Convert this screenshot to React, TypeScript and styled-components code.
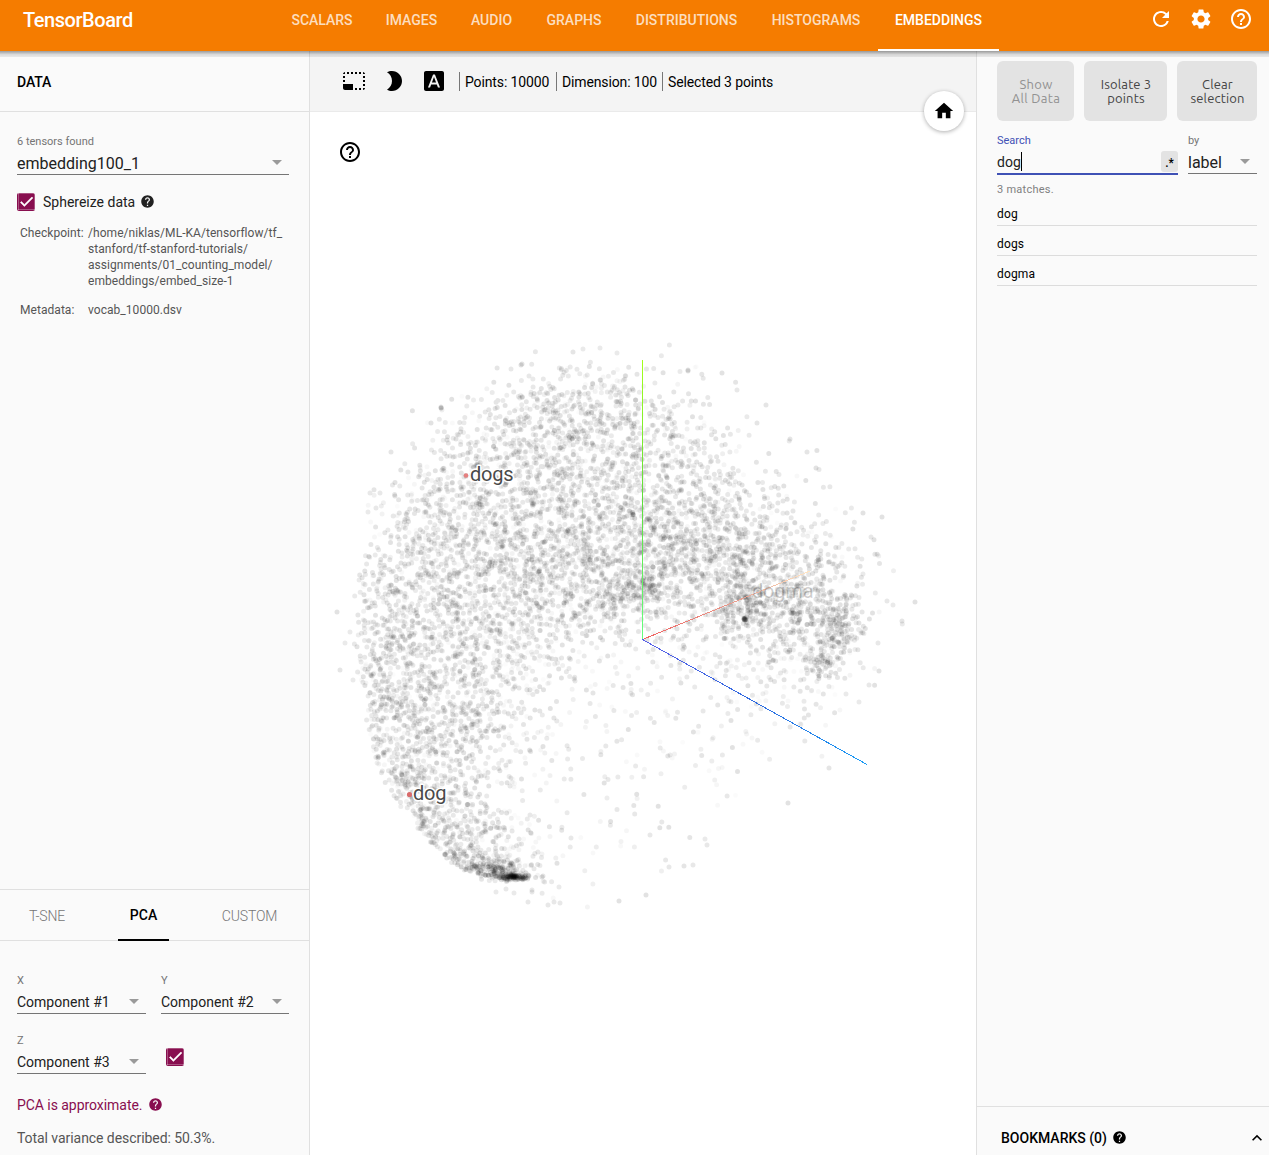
import React from "react";
import styled, { createGlobalStyle } from "styled-components";
import {
  MdArrowDropDown,
  MdBrightness2,
  MdCheck,
  MdExpandLess,
  MdFontDownload,
  MdHelp,
  MdHelpOutline,
  MdHome,
  MdPhotoSizeSelectSmall,
  MdRefresh,
  MdSettings,
} from "react-icons/md";

const ORANGE = "#f57c00";
const LINE = "#e0e0e0";
const PLUM = "#880e4f";

const GlobalStyle = createGlobalStyle`
  * { box-sizing: border-box; }
  body { margin: 0; font-family: Roboto, "Liberation Sans", sans-serif; font-size: 14px; color: #000; }
  svg { display: block; flex: none; }
`;

const Page = styled.div`
  display: flex;
  flex-direction: column;
  height: 1155px;
  overflow: hidden;
  background: #fff;
`;

/* ---------- header ---------- */
const Header = styled.header`
  position: relative;
  display: flex;
  flex: none;
  height: 51px;
  background: ${ORANGE};
  color: #fff;
  &::after {
    content: "";
    position: absolute;
    z-index: 3;
    top: 100%;
    left: 0;
    right: 0;
    height: 6px;
    background: linear-gradient(rgba(0, 0, 0, 0.38), rgba(0, 0, 0, 0.12) 60%, rgba(0, 0, 0, 0.07));
  }
`;
const Brand = styled.div`
  width: 275px;
  padding: 8px 0 0 23px;
  font-size: 20px;
  line-height: 24px;
  font-weight: 500;
  letter-spacing: -0.45px;
`;
const Nav = styled.nav`
  display: flex;
`;
const NavTab = styled.div<{ $w: number; $active?: boolean }>`
  width: ${(p) => p.$w}px;
  padding-top: 10px;
  line-height: 20px;
  text-align: center;
  font-weight: 500;
  white-space: nowrap;
  color: ${(p) => (p.$active ? "#fff" : "rgba(255,255,255,0.76)")};
  border-bottom: 2px solid ${(p) => (p.$active ? "#fff" : "transparent")};
`;
const HeaderIcons = styled.div`
  display: flex;
  gap: 16px;
  margin-left: auto;
  padding: 7px 16px 0 0;
`;

/* ---------- columns ---------- */
const Columns = styled.div`
  display: flex;
  flex: 1;
  min-height: 0;
`;
const LeftPane = styled.aside`
  display: flex;
  flex-direction: column;
  width: 310px;
  background: #fafafa;
  border-right: 1px solid ${LINE};
`;
const Stage = styled.main`
  position: relative;
  display: flex;
  flex-direction: column;
  width: 666px;
`;
const RightPane = styled.aside`
  display: flex;
  flex-direction: column;
  width: 293px;
  background: #fafafa;
  border-left: 1px solid ${LINE};
`;

/* ---------- left pane ---------- */
const PaneTitle = styled.div`
  height: 61px;
  padding: 0 17px;
  line-height: 62px;
  font-weight: 500;
  letter-spacing: -0.1px;
  border-bottom: 1px solid ${LINE};
`;
const DataBody = styled.div`
  flex: 1;
  padding: 22px 20px 0 17px;
`;
const Caption = styled.div<{ $accent?: boolean }>`
  font-size: 11px;
  line-height: 16px;
  color: ${(p) => (p.$accent ? "#3f51b5" : "#757575")};
`;
const SelectBox = styled.div<{ $size?: number; $h?: number }>`
  display: flex;
  align-items: center;
  justify-content: space-between;
  height: ${(p) => p.$h ?? 25}px;
  padding-top: 2px;
  font-size: ${(p) => p.$size ?? 14}px;
  color: #212121;
  white-space: nowrap;
  border-bottom: 1px solid #757575;
  svg { color: #9a9a9a; margin-top: -2px; }
`;
const CheckRow = styled.div`
  display: flex;
  align-items: center;
  margin-top: 17px;
  height: 20px;
  color: #212121;
`;
const CheckBox = styled.span`
  display: flex;
  align-items: center;
  justify-content: center;
  width: 18px;
  height: 18px;
  border-radius: 2px;
  background: ${PLUM};
  color: #fff;
  svg { margin-top: -2px; stroke: #fff; stroke-width: 0.8px; }
`;
const CheckLabel = styled.span`
  margin: 0 5px 0 8px;
`;
const InlineHelp = styled(MdHelp)`
  width: 15px;
  height: 15px;
  margin-top: -2px;
`;
const Facts = styled.dl`
  display: grid;
  grid-template-columns: 68px 1fr;
  row-gap: 13px;
  margin: 13px 0 0 3px;
  font-size: 12px;
  line-height: 16px;
  color: #555;
  dt, dd { margin: 0; white-space: pre; letter-spacing: 0.05px; }
`;
const ProjectionTabs = styled.div`
  display: flex;
  height: 52px;
  border-top: 1px solid ${LINE};
  border-bottom: 1px solid ${LINE};
`;
const ProjectionTab = styled.div<{ $left: number; $w: number; $active?: boolean }>`
  height: 51px;
  margin-left: ${(p) => p.$left}px;
  width: ${(p) => p.$w}px;
  text-align: center;
  line-height: ${(p) => (p.$active ? 50 : 52)}px;
  font-weight: ${(p) => (p.$active ? 500 : 300)};
  letter-spacing: ${(p) => (p.$active ? 0 : -0.15)}px;
  color: ${(p) => (p.$active ? "#000" : "#757575")};
  border-bottom: 2px solid ${(p) => (p.$active ? "#000" : "transparent")};
`;
const PcaBody = styled.div`
  height: 214px;
  padding: 32px 20px 0 17px;
`;
const AxisGrid = styled.div`
  display: grid;
  grid-template-columns: 129px 128px;
  column-gap: 15px;
  row-gap: 19px;
`;
const AxisCheck = styled.div`
  padding: 15px 0 0 5px;
`;
const ApproxNote = styled.div`
  display: flex;
  align-items: center;
  gap: 6px;
  margin-top: 21px;
  line-height: 20px;
  letter-spacing: -0.05px;
  color: ${PLUM};
`;
const Variance = styled.div`
  margin-top: 13px;
  line-height: 20px;
  letter-spacing: -0.06px;
  color: #555;
`;

/* ---------- stage ---------- */
const Toolbar = styled.div`
  display: flex;
  align-items: center;
  flex: none;
  height: 61px;
  padding-left: 32px;
  background: #f4f4f4;
  border-bottom: 1px solid #eaeaea;
`;
const ToolIcons = styled.div`
  display: flex;
  gap: 16px;
  margin-right: 13px;
`;
const Stat = styled.div<{ $w: number }>`
  width: ${(p) => p.$w}px;
  height: 19px;
  padding-left: 5px;
  border-left: 1px solid #777;
  line-height: 21px;
  letter-spacing: -0.13px;
  white-space: nowrap;
`;
const HomeButton = styled.button`
  position: absolute;
  z-index: 2;
  top: 40px;
  right: 12px;
  display: flex;
  align-items: center;
  justify-content: center;
  width: 40px;
  height: 40px;
  padding: 0;
  border: 0;
  border-radius: 50%;
  background: #fff;
  color: #000;
  box-shadow: 0 1px 4px rgba(0, 0, 0, 0.32);
`;
const HelpSpot = styled.div`
  position: absolute;
  top: 89px;
  left: 28px;
`;
const Scene = styled.svg`
  text { font-family: Roboto, "Liberation Sans", sans-serif; font-size: 20px; letter-spacing: -0.2px; paint-order: stroke; stroke: #fff; stroke-width: 3px; stroke-linejoin: round; }
`;

/* ---------- right pane ---------- */
const Inspector = styled.div`
  flex: 1;
  padding: 10px 12px 0 20px;
`;
const ButtonRow = styled.div`
  display: grid;
  grid-template-columns: 77px 83px 80px;
  gap: 10px;
`;
const ActionButton = styled.button<{ $off?: boolean }>`
  height: 60px;
  padding: 0 0 0 1px;
  border: 0;
  border-radius: 6px;
  background: #e3e3e3;
  color: ${(p) => (p.$off ? "#929292" : "#444")};
  font: 13px/14px Ubuntu, "Noto Sans", sans-serif;
  letter-spacing: ${(p) => (p.$off ? 0.3 : 0.15)}px;
  white-space: pre-line;
`;
const SearchRow = styled.div`
  display: grid;
  grid-template-columns: 181px 69px;
  gap: 10px;
  margin-top: 12px;
`;
const SearchBox = styled.div`
  display: flex;
  align-items: center;
  height: 26px;
  padding-top: 1px;
  border-bottom: 2px solid #3f51b5;
  color: #212121;
`;
const Caret = styled.span`
  width: 1px;
  height: 19px;
  background: #000;
`;
const RegexToggle = styled.span`
  width: 17px;
  height: 21px;
  margin: 0 0 1px auto;
  border-radius: 3px;
  background: #e3e3e3;
  font-size: 12px;
  line-height: 25px;
  font-weight: 500;
  text-align: center;
  color: #000;
`;
const MatchCount = styled.div`
  margin-top: 7px;
  font-size: 11px;
  line-height: 16px;
  letter-spacing: 0.25px;
  color: #808080;
`;
const Match = styled.div`
  height: 30px;
  padding-top: 4px;
  line-height: 28px;
  font-size: 12px;
  letter-spacing: 0.15px;
  border-bottom: 1px solid #dcdcdc;
`;
const MatchList = styled.div`
  margin-top: -2px;
`;
const Bookmarks = styled.div`
  display: flex;
  align-items: center;
  gap: 5px;
  height: 49px;
  padding: 14px 2px 0 24px;
  border-top: 1px solid ${LINE};
  font-weight: 500;
  svg:last-child { margin-left: auto; }
`;

/* ---------- point cloud ---------- */
// Points per 30px cell, first cell centred on (345, 355) in page units.
const DENSITY: number[][] = [
  [0, 0, 0, 0, 0, 0, 1, 0, 1, 1, 1, 1, 0, 0, 0, 0, 0, 0, 0, 0],
  [0, 0, 0, 0, 1, 3, 9, 14, 18, 14, 9, 6, 2, 1, 0, 0, 0, 0, 0, 0],
  [0, 0, 0, 2, 8, 15, 21, 28, 30, 25, 17, 12, 7, 2, 0, 0, 0, 0, 0, 0],
  [0, 0, 0, 9, 18, 24, 29, 29, 29, 27, 20, 17, 11, 4, 1, 1, 0, 0, 0, 0],
  [0, 0, 6, 15, 22, 26, 28, 28, 28, 28, 24, 22, 16, 10, 5, 3, 0, 0, 0, 0],
  [0, 2, 14, 20, 25, 28, 28, 30, 30, 30, 36, 33, 30, 20, 13, 6, 4, 1, 0, 0],
  [0, 6, 20, 26, 28, 30, 30, 30, 32, 34, 42, 38, 38, 30, 20, 13, 9, 2, 1, 0],
  [0, 12, 24, 28, 28, 32, 32, 34, 32, 36, 44, 40, 36, 36, 30, 24, 18, 8, 2, 0],
  [0, 17, 28, 30, 30, 30, 32, 30, 34, 34, 34, 27, 24, 30, 32, 30, 28, 10, 1, 0],
  [0, 22, 28, 28, 26, 28, 26, 20, 16, 14, 8, 11, 14, 24, 28, 26, 34, 12, 1, 0],
  [0, 28, 30, 27, 24, 22, 18, 12, 9, 8, 7, 7, 9, 12, 13, 19, 26, 8, 0, 0],
  [0, 32, 30, 26, 22, 18, 13, 8, 6, 5, 4, 5, 6, 7, 8, 9, 8, 1, 0, 0],
  [0, 32, 32, 28, 20, 16, 10, 8, 4, 4, 3, 3, 4, 4, 6, 6, 2, 0, 0, 0],
  [0, 28, 34, 28, 22, 13, 9, 5, 4, 3, 3, 3, 3, 4, 3, 1, 0, 0, 0, 0],
  [0, 20, 36, 30, 20, 12, 7, 3, 3, 3, 2, 2, 3, 2, 1, 0, 0, 0, 0, 0],
  [0, 6, 34, 34, 20, 12, 7, 3, 3, 3, 2, 1, 1, 1, 0, 0, 0, 0, 0, 0],
  [0, 0, 26, 46, 32, 20, 10, 4, 2, 2, 2, 1, 1, 0, 0, 0, 0, 0, 0, 0],
  [0, 0, 4, 44, 46, 38, 14, 3, 2, 1, 1, 1, 0, 0, 0, 0, 0, 0, 0, 0],
  [0, 0, 0, 0, 1, 2, 2, 2, 1, 0, 0, 0, 0, 0, 0, 0, 0, 0, 0, 0],
];
// Tight groups: x, y, spread x, spread y, count.
const CLUSTERS = [
  [514, 877, 8, 1.5, 130],
  [495, 870, 15, 5, 150],
  [745, 619, 0.8, 0.8, 18],
  [748, 603, 10, 10, 75],
  [843, 618, 8, 14, 60],
  [832, 640, 8, 14, 25],
  [823, 664, 8, 8, 40],
  [622, 593, 15, 7, 50],
  [648, 585, 8, 9, 40],
  [796, 613, 5, 4, 18],
  [472, 705, 16, 8, 10],
  [745, 560, 30, 16, 40],
];
// Sparse points that fall outside the dense body of the sphere.
const STRAYS = [
  [337, 612], [340, 670], [353, 680], [345, 643], [350, 632], [573, 352], [583, 349], [600, 348],
  [521, 365], [511, 369], [441, 408], [431, 423], [391, 452], [722, 373], [688, 371], [737, 390],
  [766, 405], [757, 423], [790, 439], [807, 452], [816, 468], [863, 513], [882, 517], [871, 537],
  [887, 601], [893, 605], [915, 602], [902, 621], [878, 643], [879, 671], [869, 685], [846, 694],
  [859, 702], [829, 768], [788, 803], [548, 905], [554, 902], [560, 903], [528, 902], [559, 887],
  [619, 901], [646, 895], [669, 867], [684, 866], [693, 865], [707, 845], [705, 839], [370, 493],
  [380, 493], [368, 512], [376, 508], [522, 364], [688, 370], [441, 407], [543, 876], [542, 877],
  [532, 890], [532, 892], [514, 893], [496, 892], [506, 889],
];
// Lower-left silhouette of the sphere.
const RIM = [
  [500, 366], [560, 358], [600, 353], [640, 353], [680, 357], [710, 362], [765, 374], [800, 393],
  [820, 409], [838, 425], [860, 447], [872, 466], [880, 490], [883, 540], [960, 548],
];
const rimAt = (y: number) => {
  if (y < RIM[0][0]) return 0;
  for (let i = 1; i < RIM.length; i++) {
    const [y0, x0] = RIM[i - 1];
    const [y1, x1] = RIM[i];
    if (y <= y1) return x0 + ((x1 - x0) * (y - y0)) / (y1 - y0);
  }
  return 0;
};

const LAYERS = 90;
function buildCloud() {
  let seed = 20177;
  const rnd = () => {
    seed = (seed + 0x6d2b79f5) | 0;
    let t = Math.imul(seed ^ (seed >>> 15), 1 | seed);
    t = (t + Math.imul(t ^ (t >>> 7), 61 | t)) ^ t;
    return ((t ^ (t >>> 14)) >>> 0) / 4294967296;
  };
  const gauss = () => Math.sqrt(-2 * Math.log(rnd() + 1e-9)) * Math.cos(6.28318 * rnd());
  const near: string[] = Array(LAYERS).fill("");
  const far: string[] = Array(LAYERS).fill("");
  const put = (set: string[], x: number, y: number) => {
    set[Math.floor(rnd() * LAYERS)] += `M${x.toFixed(1)} ${y.toFixed(1)}h0`;
  };
  DENSITY.forEach((row, r) =>
    row.forEach((n, c) => {
      const total = Math.round(n * (n > 10 ? 1.75 : 1.3));
      for (let i = 0; i < total; i++) {
        // triangular spread blends neighbouring cells
        const x = 345 + c * 30 + (rnd() + rnd() - 1) * 30;
        const y = 355 + r * 30 + (rnd() + rnd() - 1) * 30;
        if (x < rimAt(y) + rnd() * 3) continue;
        const fade = y > 640 && x > 500 ? 0.5 : x > 700 ? 0.15 : 0.25;
        put(rnd() < fade ? far : near, x, y);
      }
    })
  );
  CLUSTERS.forEach(([cx, cy, sx, sy, n]) => {
    for (let i = 0; i < n; i++) {
      const x = cx + gauss() * sx;
      const y = cy + gauss() * sy;
      if (x >= rimAt(y) || (y > 876 && y < 882 && x > 480)) put(near, x, y);
    }
  });
  STRAYS.forEach(([x, y]) => put(near, x, y));
  return { near, far };
}
const CLOUD = buildCloud();

const Projection = () => (
  <Scene width="666" height="1043" viewBox="310 112 666 1043">
    <defs>
      <linearGradient id="yAxis" gradientUnits="userSpaceOnUse" x1="642" y1="640" x2="642" y2="360">
        <stop offset="0" stopColor="#66ff80" />
        <stop offset="0.5" stopColor="#5fdc3c" />
        <stop offset="1" stopColor="#a5ff1c" />
      </linearGradient>
      <linearGradient id="xAxis" gradientUnits="userSpaceOnUse" x1="642" y1="640" x2="810" y2="571">
        <stop offset="0" stopColor="#f06060" />
        <stop offset="0.6" stopColor="#e8a090" />
        <stop offset="1" stopColor="#ffe6c4" />
      </linearGradient>
      <linearGradient id="zAxis" gradientUnits="userSpaceOnUse" x1="642" y1="640" x2="867" y2="764">
        <stop offset="0" stopColor="#5a60e8" />
        <stop offset="0.5" stopColor="#2f6be0" />
        <stop offset="1" stopColor="#1a9cf5" />
      </linearGradient>
    </defs>
    <g fill="none" strokeLinecap="round" strokeWidth="5">
      {CLOUD.far.map((d, i) => (
        <path key={`f${i}`} d={d} stroke="#000" strokeOpacity={0.015 + (i % 9) * 0.007} />
      ))}
      {CLOUD.near.map((d, i) => (
        <path key={`n${i}`} d={d} stroke="#000" strokeOpacity={0.082 + (i % 4) * 0.01} />
      ))}
    </g>
    <g shapeRendering="crispEdges" strokeWidth="1" fill="none">
      <path d="M642.5 640L642.6 360" stroke="url(#yAxis)" />
      <path d="M642.5 639.5L810 571" stroke="url(#xAxis)" />
      <path d="M642.5 639.5L867 764.5" stroke="url(#zAxis)" />
    </g>
    <circle cx="466" cy="475.5" r="2.3" fill="#e57f7f" />
    <circle cx="409.5" cy="794.5" r="2.6" fill="#d96b6b" />
    <text x="470" y="481" fill="#4a4a4a">dogs</text>
    <text x="413" y="800" fill="#4a4a4a">dog</text>
    <text x="752" y="598" fill="#000" fillOpacity="0.2" strokeOpacity="0.15">dogma</text>
  </Scene>
);

const NAV: [string, number][] = [
  ["SCALARS", 94],
  ["IMAGES", 85],
  ["AUDIO", 75],
  ["GRAPHS", 90],
  ["DISTRIBUTIONS", 135],
  ["HISTOGRAMS", 124],
  ["EMBEDDINGS", 121],
];

const Dropdown = ({ value, size, height }: { value: string; size?: number; height?: number }) => (
  <SelectBox $size={size} $h={height}>
    {value}
    <MdArrowDropDown size={24} />
  </SelectBox>
);

export default function App() {
  return (
    <Page>
      <GlobalStyle />
      <Header>
        <Brand>TensorBoard</Brand>
        <Nav>
          {NAV.map(([name, w]) => (
            <NavTab key={name} $w={w} $active={name === "EMBEDDINGS"}>
              {name}
            </NavTab>
          ))}
        </Nav>
        <HeaderIcons>
          <MdRefresh size={24} />
          <MdSettings size={24} />
          <MdHelpOutline size={24} />
        </HeaderIcons>
      </Header>
      <Columns>
        <LeftPane>
          <PaneTitle>DATA</PaneTitle>
          <DataBody>
            <Caption>6 tensors found</Caption>
            <Dropdown value="embedding100_1" size={16} />
            <CheckRow>
              <CheckBox><MdCheck size={17} /></CheckBox>
              <CheckLabel>Sphereize data</CheckLabel>
              <InlineHelp />
            </CheckRow>
            <Facts>
              <dt>Checkpoint:</dt>
              <dd>{"/home/niklas/ML-KA/tensorflow/tf_\nstanford/tf-stanford-tutorials/\nassignments/01_counting_model/\nembeddings/embed_size-1"}</dd>
              <dt>Metadata:</dt>
              <dd>vocab_10000.dsv</dd>
            </Facts>
          </DataBody>
          <ProjectionTabs>
            <ProjectionTab $left={16} $w={62}>T-SNE</ProjectionTab>
            <ProjectionTab $left={40} $w={51} $active>PCA</ProjectionTab>
            <ProjectionTab $left={40} $w={81}>CUSTOM</ProjectionTab>
          </ProjectionTabs>
          <PcaBody>
            <AxisGrid>
              <div><Caption>X</Caption><Dropdown value="Component #1" height={25} /></div>
              <div><Caption>Y</Caption><Dropdown value="Component #2" height={25} /></div>
              <div><Caption>Z</Caption><Dropdown value="Component #3" height={25} /></div>
              <AxisCheck><CheckBox><MdCheck size={17} /></CheckBox></AxisCheck>
            </AxisGrid>
            <ApproxNote>PCA is approximate. <InlineHelp /></ApproxNote>
            <Variance>Total variance described: 50.3%.</Variance>
          </PcaBody>
        </LeftPane>
        <Stage>
          <Toolbar>
            <ToolIcons>
              <MdPhotoSizeSelectSmall size={24} />
              <MdBrightness2 size={24} />
              <MdFontDownload size={24} />
            </ToolIcons>
            <Stat $w={97}>Points: 10000</Stat>
            <Stat $w={106}>Dimension: 100</Stat>
            <Stat $w={120}>Selected 3 points</Stat>
          </Toolbar>
          <Projection />
          <HomeButton><MdHome size={22} /></HomeButton>
          <HelpSpot><MdHelpOutline size={24} /></HelpSpot>
        </Stage>
        <RightPane>
          <Inspector>
            <ButtonRow>
              <ActionButton $off>{"Show\nAll Data"}</ActionButton>
              <ActionButton>{"Isolate 3\npoints"}</ActionButton>
              <ActionButton>{"Clear\nselection"}</ActionButton>
            </ButtonRow>
            <SearchRow>
              <div>
                <Caption $accent>Search</Caption>
                <SearchBox>dog<Caret /><RegexToggle>.*</RegexToggle></SearchBox>
              </div>
              <div>
                <Caption>by</Caption>
                <Dropdown value="label" size={16} height={25} />
              </div>
            </SearchRow>
            <MatchCount>3 matches.</MatchCount>
            <MatchList>
              <Match>dog</Match>
              <Match>dogs</Match>
              <Match>dogma</Match>
            </MatchList>
          </Inspector>
          <Bookmarks>
            BOOKMARKS (0) <InlineHelp />
            <MdExpandLess size={20} />
          </Bookmarks>
        </RightPane>
      </Columns>
    </Page>
  );
}
